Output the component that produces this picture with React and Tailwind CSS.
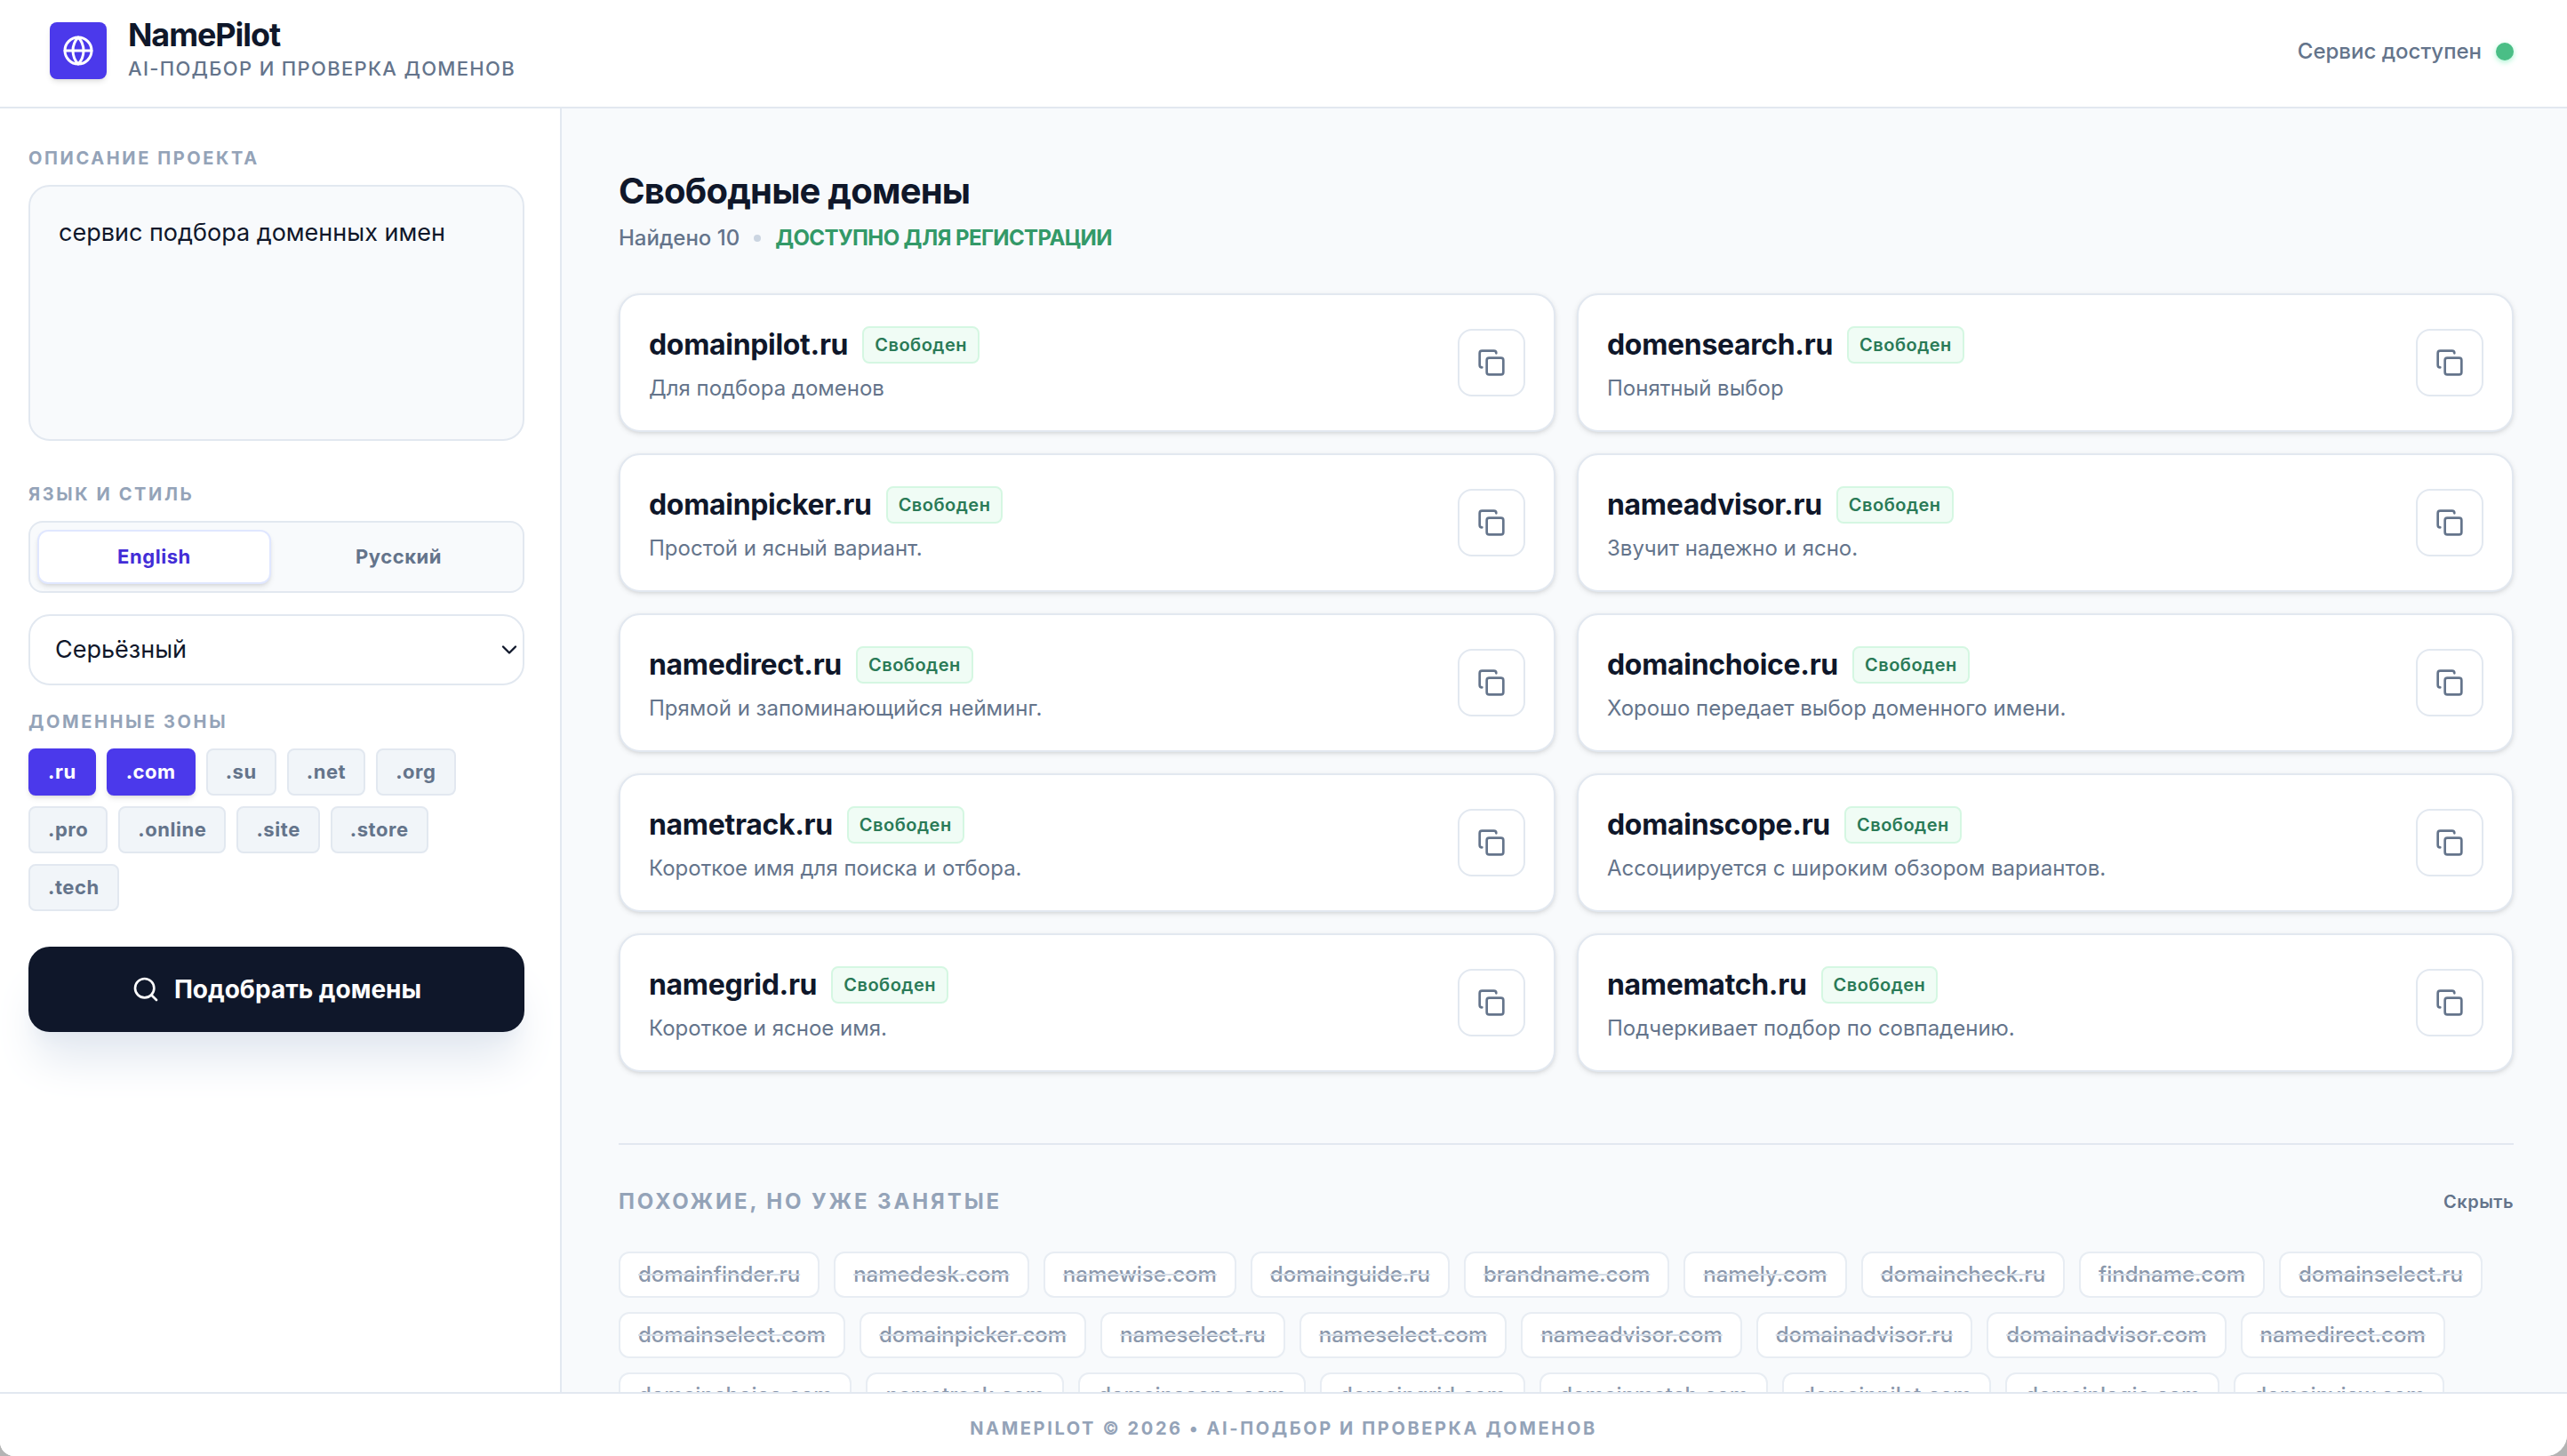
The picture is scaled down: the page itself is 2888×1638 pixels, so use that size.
import { Globe, Search, Copy, ChevronDown } from "lucide-react";

const zones = [".ru", ".com", ".su", ".net", ".org", ".pro", ".online", ".site", ".store", ".tech"];
const selected = [".ru", ".com"];

const domains = [
  ["domainpilot.ru", "Для подбора доменов"],
  ["domensearch.ru", "Понятный выбор"],
  ["domainpicker.ru", "Простой и ясный вариант."],
  ["nameadvisor.ru", "Звучит надежно и ясно."],
  ["namedirect.ru", "Прямой и запоминающийся нейминг."],
  ["domainchoice.ru", "Хорошо передает выбор доменного имени."],
  ["nametrack.ru", "Короткое имя для поиска и отбора."],
  ["domainscope.ru", "Ассоциируется с широким обзором вариантов."],
  ["namegrid.ru", "Короткое и ясное имя."],
  ["namematch.ru", "Подчеркивает подбор по совпадению."],
];

const taken = [
  "domainfinder.ru", "namedesk.com", "namewise.com", "domainguide.ru", "brandname.com",
  "namely.com", "domaincheck.ru", "findname.com", "domainselect.ru",
  "domainselect.com", "domainpicker.com", "nameselect.ru", "nameselect.com",
  "nameadvisor.com", "domainadvisor.ru", "domainadvisor.com", "namedirect.com",
  "domainchoice.com", "nametrack.com", "domainscope.com", "domaingrid.com",
  "domainmatch.com", "domainpilot.com", "domainlogic.com", "domainview.com",
];

function Label({ children, htmlFor }) {
  const Tag = htmlFor ? "label" : "h2";
  return (
    <Tag htmlFor={htmlFor} className="block text-[20px] leading-7 font-bold tracking-[0.13em] uppercase text-[#94a3b8]">
      {children}
    </Tag>
  );
}

function DomainCard({ name, note }) {
  return (
    <li className="flex items-center justify-between rounded-3xl border-2 border-slate-200 bg-white px-8 py-[31px] shadow-[0_2px_6px_rgba(0,0,0,0.1),0_2px_4px_-2px_rgba(0,0,0,0.1)]">
      <div>
        <div className="flex h-[50px] items-center gap-4">
          <h3 className="text-[32px] leading-10 font-bold tracking-[-0.01em] text-[#0f172a]">{name}</h3>
          <span className="rounded-lg border-2 border-[#d5f7e2] bg-[#f0fcf5] px-3 text-[20px] leading-[38px] font-semibold tracking-wide text-[#2a7a57]">
            Свободен
          </span>
        </div>
        <p className="mt-2 text-[24px] leading-8 text-[#64748b]">{note}</p>
      </div>
      <button type="button" aria-label="Скопировать" className="flex size-19 items-center justify-center rounded-2xl border-2 border-slate-200 bg-white text-[#64748b]">
        <Copy size={32} strokeWidth={2} />
      </button>
    </li>
  );
}

export default function App() {
  return (
    <div className="h-screen bg-[#b4b4b4] font-['Inter',sans-serif]">
      <div className="flex h-full flex-col overflow-hidden rounded-br-[24px] rounded-bl-[16px] bg-white">
        <header className="flex h-[122px] shrink-0 items-center justify-between border-b-2 border-slate-200 pr-[60px] pb-1.5 pl-14">
          <div className="flex items-center gap-6">
            <div className="flex size-16 items-center justify-center rounded-lg bg-[#4b39eb] text-white shadow-md">
              <Globe size={36} strokeWidth={2} />
            </div>
            <div>
              <h1 className="text-[36px] leading-9 font-bold tracking-[-0.03em] text-[#0f172a]">NamePilot</h1>
              <p className="mt-1 text-[22px] leading-8 font-medium tracking-[0.06em] text-[#64748b] uppercase">AI-подбор и проверка доменов</p>
            </div>
          </div>
          <div className="flex items-center gap-4 pt-0.5 text-[24px] font-medium text-[#64748b]">
            Сервис доступен
            <span className="size-5 rounded-full bg-[#4abe86] shadow-[0_2px_6px_#a7f3d0]" />
          </div>
        </header>

        <div className="flex min-h-0 flex-1">
          <aside className="w-[632px] shrink-0 border-r-2 border-slate-200 bg-white pt-[42px] pr-10 pl-8">
            <Label htmlFor="about">Описание проекта</Label>
            <textarea
              id="about"
              defaultValue="сервис подбора доменных имен"
              className="mt-4 block h-72 w-full resize-none rounded-3xl border-2 border-slate-200 bg-[#f8fafc] px-8 py-7 text-[27px] leading-12 text-[#0f172a]"
            />
            <div className="mt-[46px]">
              <Label>Язык и стиль</Label>
            </div>
            <div className="mt-4 grid grid-cols-2 gap-3 rounded-2xl border-2 border-slate-200 bg-[#f8fafc] p-2">
              <button type="button" className="h-[61px] rounded-xl border-2 border-[#e0e7ff] bg-white text-[22px] font-bold tracking-wide text-[#432dd7] shadow-md">English</button>
              <button type="button" className="h-[61px] rounded-xl text-[22px] font-bold tracking-wide text-[#64748b]">Русский</button>
            </div>
            <div className="relative mt-6">
              <select aria-label="Стиль" className="block h-20 w-full appearance-none rounded-3xl border-2 border-slate-200 bg-white px-7 text-[27px] text-[#0f172a]">
                <option>Серьёзный</option>
              </select>
              <ChevronDown size={28} strokeWidth={2} className="pointer-events-none absolute top-[26px] right-[3px] text-[#0f172a]" />
            </div>
            <div className="mt-[27px]">
              <Label>Доменные зоны</Label>
            </div>
            <div className="mt-4 flex flex-wrap gap-3">
              {zones.map((z) => (
                <button
                  key={z}
                  type="button"
                  className={
                    selected.includes(z)
                      ? "h-[53px] rounded-lg border-2 border-[#4b39eb] bg-[#4b39eb] px-5 text-[22px] font-bold tracking-wide text-white shadow-md"
                      : "h-[53px] rounded-lg border-2 border-slate-200 bg-[#f1f5f9] px-5 text-[22px] font-bold tracking-wide text-[#64748b]"
                  }
                >
                  {z}
                </button>
              ))}
            </div>
            <button type="button" className="mt-10 flex h-24 w-full items-center justify-center gap-4 rounded-3xl bg-[#0f172a] text-[28px] font-bold text-white shadow-[0_40px_50px_-10px_#e2e8f0,0_16px_20px_-12px_#e2e8f0]">
              <Search size={32} strokeWidth={2} />
              Подобрать домены
            </button>
          </aside>

          <main className="min-w-0 flex-1 overflow-hidden bg-[#f8fafc] pt-[65px] pr-[60px] pl-16">
            <h2 className="text-[40px] leading-[56px] font-bold tracking-[-0.02em] text-[#0f172a]">Свободные домены</h2>
            <div className="mt-[7px] flex items-center gap-4 text-[24px] leading-9 font-medium text-[#64748b]">
              Найдено 10
              <span className="size-2 rounded-full bg-[#cbd5e1]" />
              <span className="font-bold tracking-tight text-[#339968] uppercase">Доступно для регистрации</span>
            </div>
            <ul className="mt-11 grid grid-cols-2 gap-6">
              {domains.map(([name, note]) => (
                <DomainCard key={name} name={name} note={note} />
              ))}
            </ul>
            <section className="mt-20 border-t-2 border-slate-200 pt-12">
              <div className="flex items-center justify-between">
                <h2 className="text-[24px] leading-8 font-bold tracking-[0.12em] text-[#94a3b8] uppercase">Похожие, но уже занятые</h2>
                <button type="button" className="text-[20px] leading-8 font-semibold tracking-wide text-[#64748b]">Скрыть</button>
              </div>
              <ul className="mt-10 flex flex-wrap gap-4">
                {taken.map((name) => (
                  <li key={name} className="rounded-xl border-2 border-[#e8edf3] bg-white px-5 text-[24px] leading-12 font-medium text-[#8b98ac] line-through decoration-[#d5dde7] decoration-2">
                    {name}
                  </li>
                ))}
              </ul>
            </section>
          </main>
        </div>

        <footer className="flex h-[72px] shrink-0 items-center justify-center border-t-2 border-slate-200 bg-white pt-2 text-[20px] font-bold tracking-[0.13em] text-[#94a3b8] uppercase">
          NamePilot © 2026 • AI-подбор и проверка доменов
        </footer>
      </div>
    </div>
  );
}
